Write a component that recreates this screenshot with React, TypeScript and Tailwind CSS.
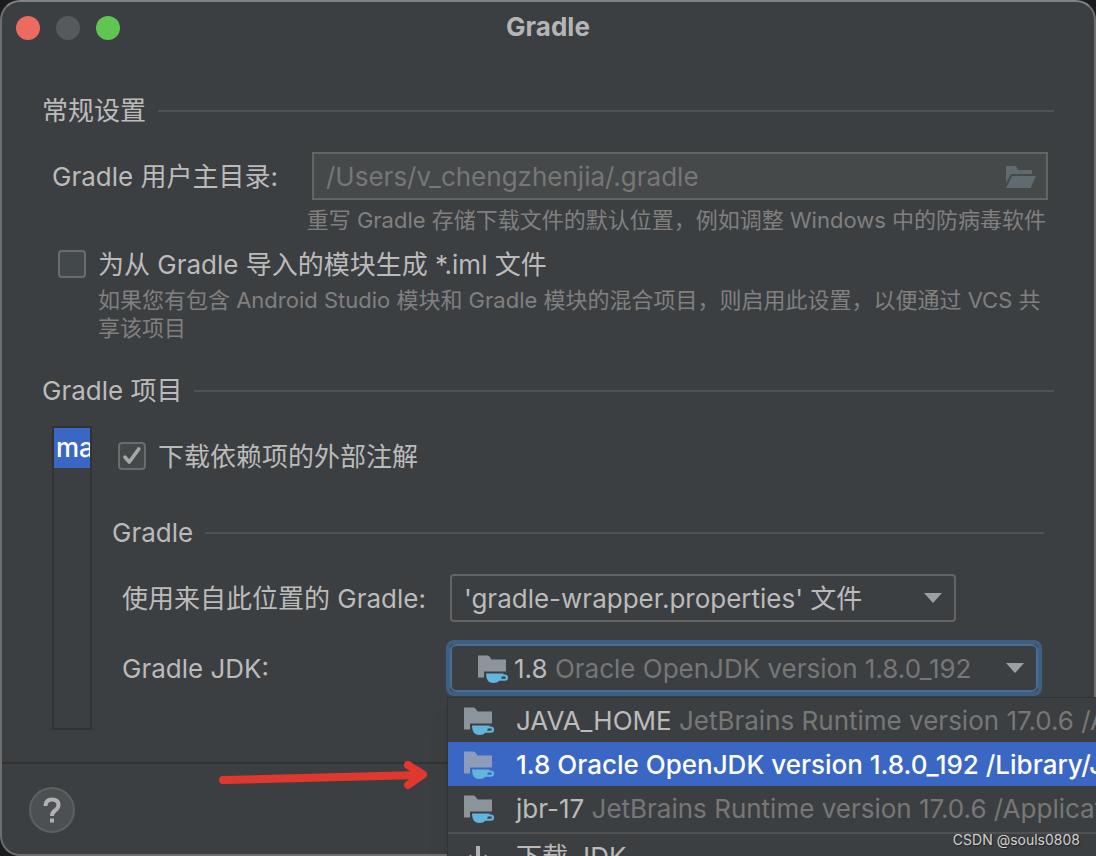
import { useState, type ReactNode } from "react";

function Heading({ children }: { children: ReactNode }) {
  return (
    <div className="flex h-8 items-center gap-3">
      <h2 className="shrink-0">{children}</h2>
      <div className="h-0.5 flex-1 bg-[#515151]" />
    </div>
  );
}

function CheckBox({ id, initial }: { id: string; initial: boolean }) {
  const [checked, setChecked] = useState(initial);
  return (
    <span className="relative flex size-7 shrink-0">
      <input
        id={id}
        type="checkbox"
        checked={checked}
        onChange={(e) => setChecked(e.target.checked)}
        className="size-7 appearance-none rounded-sm border-2 border-[#6b6b6b] bg-[#43494a]"
      />
      {checked && (
        <svg viewBox="0 0 28 28" className="pointer-events-none absolute inset-0 size-7" fill="none">
          <path d="M7 15.2 L11.3 20 L20.8 7" stroke="#a7a7a7" strokeWidth="3.6" strokeLinecap="round" strokeLinejoin="round" />
        </svg>
      )}
    </span>
  );
}

function JdkIcon({ selected = false }: { selected?: boolean }) {
  return (
    <svg viewBox="0 0 32 30" className="h-[30px] w-8 shrink-0">
      <path
        d="M0 2.5 H9.5 Q11 2.5 12 4.2 L13.5 6.5 H28 V18.5 H6 V24.5 H0 Z"
        fill={selected ? "#8d9cba" : "#8c959c"}
      />
      <path
        d="M8 20.5 H25.5 V21.5 H27 Q30 21.5 30 24.6 Q30 27.8 27 27.8 H21.5 Q19.5 30 15.5 30 Q8 30 8 20.5 Z M23.8 23.4 Q23.6 25 23 25.8 H26.7 Q27.8 25.8 27.8 24.6 Q27.8 23.4 26.7 23.4 Z"
        fill="#62b5dd"
        fillRule="evenodd"
      />
    </svg>
  );
}

function Arrow() {
  return (
    <svg viewBox="0 0 18 10" className="h-2.5 w-[18px] shrink-0">
      <path d="M0 0 H18 L9 10 Z" fill="#9da0a3" />
    </svg>
  );
}

const jdks = [
  { name: "JAVA_HOME", detail: "JetBrains Runtime version 17.0.6 /Applications" },
  { name: "1.8", detail: "Oracle OpenJDK version 1.8.0_192 /Library/Java" },
  { name: "jbr-17", detail: "JetBrains Runtime version 17.0.6 /Applications" },
];

function JdkPopup() {
  const active = 1;
  return (
    <div className="absolute top-[57px] left-px z-10 w-[760px] border-t border-l border-[#323334] bg-[#3c3f41] shadow-xl">
      <ul role="listbox" aria-label="Gradle JDK">
        {jdks.map((jdk, i) => (
          <li
            key={jdk.name}
            role="option"
            aria-selected={i === active}
            className={
              i === active
                ? "flex h-11 items-center gap-5 bg-[#3a66c4] pl-4 font-medium whitespace-nowrap text-white"
                : "flex h-11 items-center gap-5 pl-4 whitespace-nowrap"
            }
          >
            <JdkIcon selected={i === active} />
            <span className="pt-0.5">
              {jdk.name} <span className={i === active ? "text-white" : "text-[#777777]"}>{jdk.detail}</span>
            </span>
          </li>
        ))}
      </ul>
      <div className="mt-0.5 h-0.5 bg-[#515151]" />
      <button type="button" className="flex h-11 w-full items-center gap-5 pl-4 text-left">
        <svg viewBox="0 0 32 30" className="h-[30px] w-8" fill="none" stroke="#afb1b3" strokeWidth="4">
          <path d="M14 5 V22 M5 15 L14 24 L23 15 M4 28 H24" />
        </svg>
        <span className="pt-0.5">下载 JDK…</span>
      </button>
    </div>
  );
}

export default function App() {
  return (
    <div className="h-screen overflow-hidden bg-[#1b1c1e] font-['Inter','Noto_Sans_CJK_SC',sans-serif] text-[26px] leading-8 text-[#bbbbbb]">
      <div className="relative flex h-full flex-col rounded-[20px] border-2 border-[#6c6e70] border-t-[#808284] bg-[#3c3f41]">
        <header className="relative flex h-[52px] shrink-0 items-center justify-center">
          <div className="absolute left-3.5 flex gap-4">
            <button type="button" aria-label="Close" className="size-6 rounded-full bg-[#ed6a5e]" />
            <button type="button" aria-label="Minimize" className="size-6 rounded-full bg-[#575a5c]" />
            <button type="button" aria-label="Zoom" className="size-6 rounded-full bg-[#61c554]" />
          </div>
          <h1 className="pb-0.5 font-bold text-[#b4b5b6]">Gradle</h1>
        </header>

        <main className="flex flex-1 flex-col px-10 pt-[41px]">
          <Heading>常规设置</Heading>

          <div className="mt-[25px] mr-1.5 ml-2.5 flex items-center">
            <label htmlFor="home" className="w-[260px] shrink-0 pt-0.5">Gradle 用户主目录:</label>
            <div className="flex h-12 flex-1 items-center border-2 border-[#646464] bg-[#45494a] pt-0.5 pr-2.5 pl-3">
              <input
                id="home"
                disabled
                value="/Users/v_chengzhenjia/.gradle"
                readOnly
                className="min-w-0 flex-1 bg-transparent text-[#777777]"
              />
              <button type="button" aria-label="Browse" className="shrink-0">
                <svg viewBox="0 0 30 22" className="h-[22px] w-[30px]" fill="#616a6e">
                  <path d="M0 0 H10 L12 4 H26 V8 H5 L0 17 Z" />
                  <path d="M6 10 H30 L24.5 22 H0 Z" />
                </svg>
              </button>
            </div>
          </div>
          <p className="mt-1.5 mr-2 text-right text-[22px] leading-7 text-[#808080]">
            重写 Gradle 存储下载文件的默认位置，例如调整 Windows 中的防病毒软件
          </p>

          <div className="mt-3.5 ml-4 flex h-8 items-center gap-3">
            <CheckBox id="iml" initial={false} />
            <label htmlFor="iml" className="pt-0.5">为从 Gradle 导入的模块生成 *.iml 文件</label>
          </div>
          <p className="mt-1.5 ml-14 text-[22px] leading-7 text-[#808080]">
            如果您有包含 Android Studio 模块和 Gradle 模块的混合项目，则启用此设置，以便通过 VCS 共享该项目
          </p>

          <div className="mt-[33px]">
            <Heading>Gradle 项目</Heading>
          </div>

          <div className="mt-[19px] ml-2.5 flex gap-5">
            <div className="h-[304px] w-10 shrink-0 overflow-hidden border-2 border-[#323232]">
              <div className="h-10 bg-[#3a66c4] pl-0.5 leading-10 font-medium text-white">main</div>
            </div>
            <div className="min-w-0 flex-1">
              <div className="mt-3.5 ml-1.5 flex h-8 items-center gap-3">
                <CheckBox id="annotations" initial={true} />
                <label htmlFor="annotations" className="pt-0.5">下载依赖项的外部注解</label>
              </div>
              <div className="mt-[45px] mr-2.5">
                <Heading>Gradle</Heading>
              </div>
              <div className="mt-[25px] ml-2.5 flex items-center">
                <label htmlFor="distribution" className="w-[328px] shrink-0 pt-0.5">使用来自此位置的 Gradle:</label>
                <div className="relative flex items-center">
                  <select
                    id="distribution"
                    className="h-12 w-[506px] appearance-none rounded-sm border-2 border-[#646464] bg-[#3c3f41] pt-0.5 pl-3"
                  >
                    <option>'gradle-wrapper.properties' 文件</option>
                  </select>
                  <span className="pointer-events-none absolute right-3.5">
                    <Arrow />
                  </span>
                </div>
              </div>
              <div className="mt-[18px] mr-3 ml-2.5 flex items-center">
                <label htmlFor="jdk" className="w-[324px] shrink-0 pt-0.5">Gradle JDK:</label>
                <div className="relative min-w-0 flex-1">
                  <button
                    id="jdk"
                    type="button"
                    aria-haspopup="listbox"
                    aria-expanded="true"
                    className="flex h-14 w-full items-center rounded-lg border-4 border-[#3e5f83] text-left whitespace-nowrap"
                  >
                    <span className="flex h-12 w-full items-center gap-1 rounded-md border-2 border-[#466d94] pr-3 pl-[26px]">
                      <JdkIcon />
                      <span className="flex-1 pt-0.5">
                        1.8 <span className="text-[#777777]">Oracle OpenJDK version 1.8.0_192</span>
                      </span>
                      <Arrow />
                    </span>
                  </button>
                  <JdkPopup />
                </div>
              </div>
            </div>
          </div>
        </main>

        <footer className="flex h-[92px] shrink-0 items-center border-t-2 border-[#323232] px-[27px] pt-0.5">
          <button
            type="button"
            aria-label="Help"
            className="flex size-[46px] items-center justify-center rounded-full border-2 border-[#5e6060] bg-[#4c5052]"
          >
            <svg viewBox="0 0 18 26" className="h-[26px] w-[18px]" fill="none" stroke="#afb1b3" strokeWidth="4">
              <path d="M2.5 9 Q2.5 2.5 9 2.5 Q15.5 2.5 15.5 8 Q15.5 11 12 13.5 Q9 15.5 9 19" />
              <path d="M9 21.5 V25.5" />
            </svg>
          </button>
        </footer>

        <svg viewBox="0 0 212 32" className="absolute bottom-[62px] left-[216px] h-8 w-[212px]" fill="none" stroke="#e0382e" strokeLinecap="round" strokeLinejoin="round">
          <path d="M5 20 L202 15" strokeWidth="8" />
          <path d="M190 5 L205 14.5 L190 25" strokeWidth="8" />
        </svg>
        <p className="absolute right-3.5 bottom-0 z-20 text-sm leading-7 text-[#d0d0d0] [text-shadow:1px_1px_1px_#222]">
          CSDN @souls0808
        </p>
      </div>
    </div>
  );
}
